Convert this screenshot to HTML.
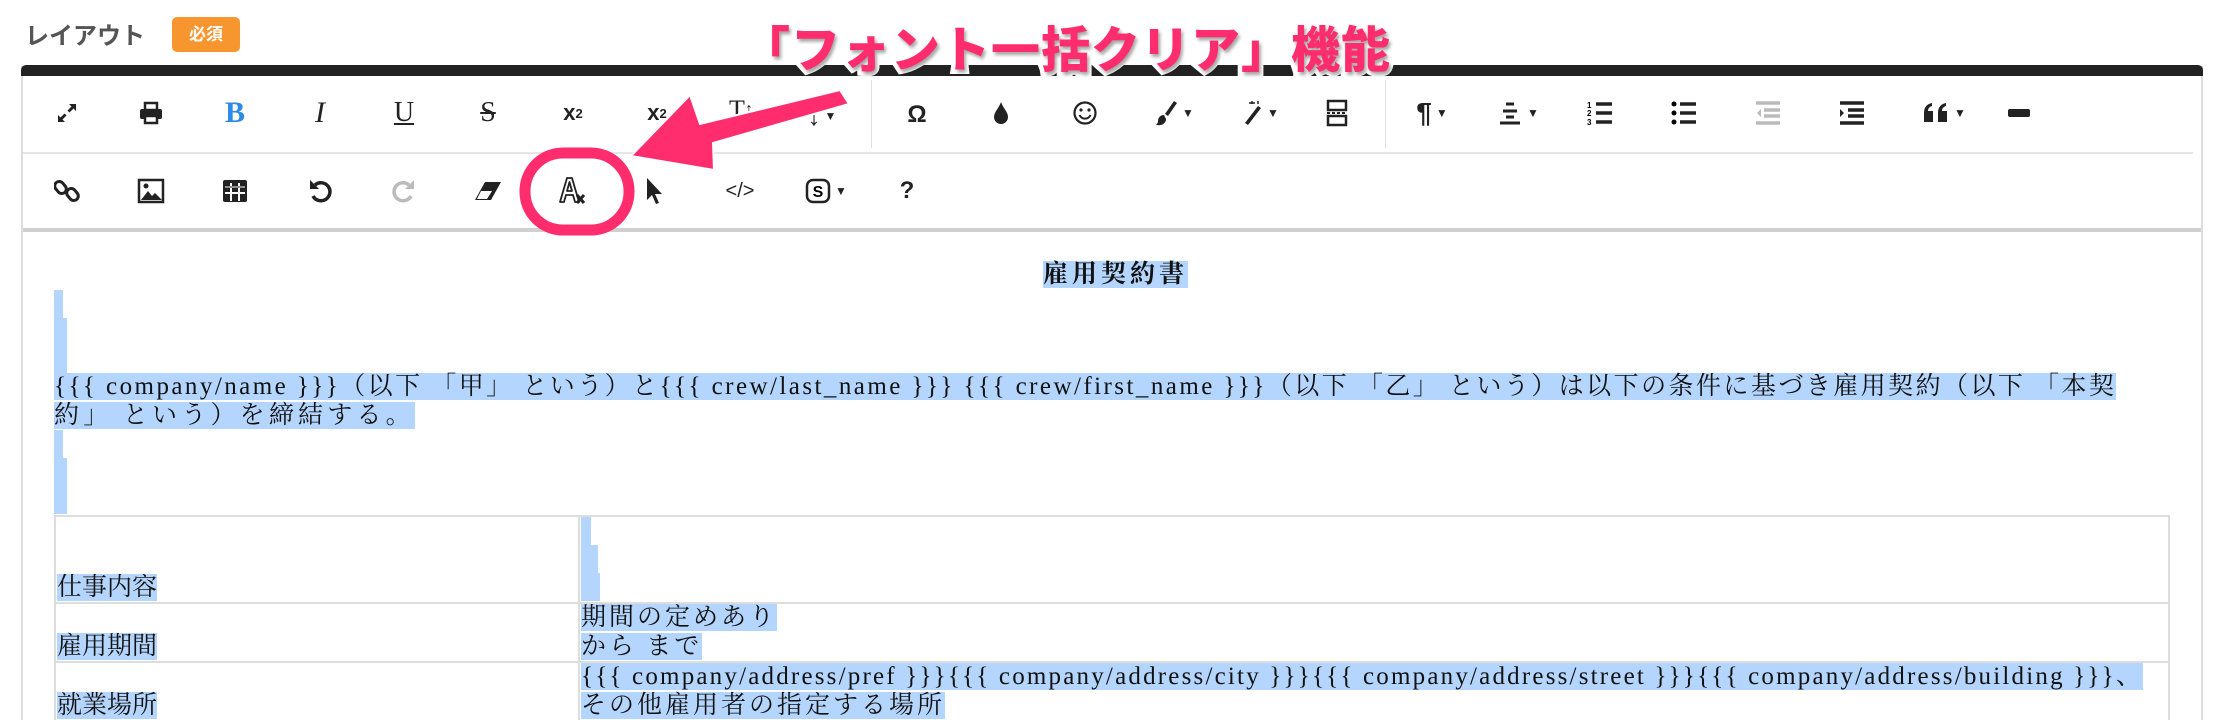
<!DOCTYPE html>
<html style="height:720px;overflow:hidden"><head><meta charset="utf-8"><style>
*{box-sizing:border-box}
body{margin:0;width:2224px;height:720px;overflow:hidden;background:#fff;position:relative;font-family:"Liberation Sans","Noto Sans CJK JP",sans-serif}
.lbl{position:absolute;left:25px;top:16px;font-size:24px;font-weight:bold;color:#555}
.badge{position:absolute;left:172px;top:17px;width:68px;height:35px;background:#f7962f;border-radius:5px;color:#fff;font-size:17px;font-weight:bold;text-align:center;line-height:35px}
.ed{position:absolute;left:21px;top:66px;width:2182px;height:654px;border:2px solid #ddd;border-top:none;border-bottom:none}
.topbar{position:absolute;left:21px;top:65px;width:2182px;height:11px;background:#222;border-radius:5px 5px 0 0}
.sep1{position:absolute;left:23px;top:152px;width:2170px;height:2px;background:#e6e6e6}
.tbb{position:absolute;left:23px;top:228px;width:2178px;height:4px;background:#d0d0d0}
.vs{position:absolute;top:80px;width:1px;height:68px;background:#e0e0e0}
.ic{position:absolute;width:40px;height:40px;margin-left:-20px;margin-top:-20px;display:flex;align-items:center;justify-content:center;color:#222;font-size:26px}
.ic svg{display:block}
.car{font-size:12px;margin-left:4px}
.ct{position:absolute;left:54px;top:0;font-family:"Liberation Serif","Noto Serif CJK SC",serif;font-size:25px;line-height:28.5px;color:#111;white-space:nowrap}
.h{background:#b4d5fe}
.bar{position:absolute;background:#b4d5fe}
.tw{position:absolute;left:54px;top:515px;width:2118px;height:205px;overflow:hidden}
table{width:2116px;table-layout:fixed;border-collapse:collapse;font-family:"Liberation Serif","Noto Serif CJK SC",serif;font-size:25px;line-height:28.5px;color:#111}
td{border:2px solid #ddd;vertical-align:bottom;padding:0 0 0 1px;white-space:nowrap;overflow:hidden}
.ann{position:absolute;left:741px;top:16px;font-family:"Noto Sans CJK JP",sans-serif;font-weight:900;font-size:49px;color:#ff2d6e;letter-spacing:1px;-webkit-text-stroke:9px #fff;paint-order:stroke fill;text-shadow:2px 3px 3px rgba(0,0,0,.35);line-height:62px}
</style></head><body>
<div class="lbl">レイアウト</div>
<div class="badge">必須</div>
<div class="ed"></div>
<div class="topbar"></div>
<div class="sep1"></div>
<div class="tbb"></div>
<div class="vs" style="left:871px"></div>
<div class="vs" style="left:1385px"></div>

<!-- row1 -->
<div class="ic" style="left:67px;top:113px"><svg width="24" height="24" viewBox="0 0 24 24"><path d="M14 3h7v7l-2.5-2.5-4 4-2-2 4-4zM10 21H3v-7l2.5 2.5 4-4 2 2-4 4z" fill="#222"/></svg></div>
<div class="ic" style="left:151px;top:113px"><svg width="26" height="24" viewBox="0 0 26 24"><rect x="7" y="2" width="12" height="7" fill="none" stroke="#222" stroke-width="2.5"/><rect x="2" y="8" width="22" height="10" rx="2" fill="#222"/><rect x="7" y="15" width="12" height="7" fill="#fff" stroke="#222" stroke-width="2.5"/></svg></div>
<div class="ic" style="left:235px;top:113px;font-family:'Liberation Serif',serif;font-weight:bold;color:#2b8be6;font-size:30px">B</div>
<div class="ic" style="left:320px;top:113px;font-family:'Liberation Serif',serif;font-style:italic;font-size:30px">I</div>
<div class="ic" style="left:404px;top:113px;font-family:'Liberation Serif',serif;font-size:28px;text-decoration:underline">U</div>
<div class="ic" style="left:488px;top:113px;font-family:'Liberation Serif',serif;font-size:28px;text-decoration:line-through">S</div>
<div class="ic" style="left:573px;top:113px;font-size:22px;font-weight:bold">x<sub style="font-size:13px">2</sub></div>
<div class="ic" style="left:657px;top:113px;font-size:22px;font-weight:bold">x<sup style="font-size:13px">2</sup></div>
<div class="ic" style="left:741px;top:110px;font-family:'Liberation Serif',serif;font-size:26px">T<span style="font-size:16px">↕</span></div>
<div class="ic" style="left:822px;top:116px;font-size:26px">↓<span class="car">▼</span></div>
<div class="ic" style="left:917px;top:115px;font-size:24px;font-weight:bold">Ω</div>
<div class="ic" style="left:1001px;top:113px"><svg width="18" height="24" viewBox="0 0 18 24"><path d="M9 1C7 7 2 11 2 16a7 7 0 0014 0C16 11 11 7 9 1z" fill="#222"/></svg></div>
<div class="ic" style="left:1085px;top:113px"><svg width="26" height="26" viewBox="0 0 26 26"><circle cx="13" cy="13" r="10.5" fill="none" stroke="#222" stroke-width="2.2"/><circle cx="9" cy="10" r="1.6" fill="#222"/><circle cx="17" cy="10" r="1.6" fill="#222"/><path d="M7.5 15a6 6 0 0011 0" fill="none" stroke="#222" stroke-width="2"/></svg></div>
<div class="ic" style="left:1175px;top:113px;width:60px;margin-left:-30px"><svg width="22" height="26" viewBox="0 0 22 26"><path d="M18 1l3 2-9 13-3-2z" fill="#222"/><path d="M8 15c-4 0-6 3-6 6 0 2-1 3-2 4 5 1 10-1 10-6z" fill="#222"/></svg><span class="car">▼</span></div>
<div class="ic" style="left:1260px;top:113px;width:60px;margin-left:-30px"><svg width="22" height="26" viewBox="0 0 22 26"><path d="M17 6l3 2L7 25l-3-2z" fill="#222"/><path d="M11 1v3M8 3h6M17 1v3" stroke="#222" stroke-width="1.5"/></svg><span class="car">▼</span></div>
<div class="ic" style="left:1337px;top:113px"><svg width="22" height="28" viewBox="0 0 22 28"><rect x="2" y="2" width="18" height="9" fill="none" stroke="#222" stroke-width="2.5"/><rect x="2" y="17" width="18" height="9" fill="none" stroke="#222" stroke-width="2.5"/><path d="M1 14h20" stroke="#222" stroke-width="2" stroke-dasharray="3 2"/></svg></div>
<div class="ic" style="left:1432px;top:113px;width:60px;margin-left:-30px;font-size:28px;font-weight:bold">¶<span class="car">▼</span></div>
<div class="ic" style="left:1518px;top:113px;width:60px;margin-left:-30px"><svg width="26" height="24" viewBox="0 0 26 24"><path d="M9 3h8M6 10h14M9 16h8M3 22h20" stroke="#222" stroke-width="3"/></svg><span class="car">▼</span></div>
<div class="ic" style="left:1600px;top:113px"><svg width="28" height="28" viewBox="0 0 28 28"><path d="M10 5h16M10 14h16M10 23h16" stroke="#222" stroke-width="3.5"/><text x="1" y="9" font-size="8" font-family="Liberation Sans" font-weight="bold">1</text><text x="1" y="17" font-size="8" font-family="Liberation Sans" font-weight="bold">2</text><text x="1" y="26" font-size="8" font-family="Liberation Sans" font-weight="bold">3</text></svg></div>
<div class="ic" style="left:1684px;top:113px"><svg width="28" height="28" viewBox="0 0 28 28"><path d="M10 5h16M10 14h16M10 23h16" stroke="#222" stroke-width="3.5"/><circle cx="4" cy="5" r="2.5"/><circle cx="4" cy="14" r="2.5"/><circle cx="4" cy="23" r="2.5"/></svg></div>
<div class="ic" style="left:1768px;top:113px"><svg width="28" height="28" viewBox="0 0 28 28"><path d="M2 4h24M10 11h16M10 17h16M2 24h24" stroke="#bbb" stroke-width="3.5"/><path d="M7 10v8l-4-4z" fill="#bbb"/></svg></div>
<div class="ic" style="left:1852px;top:113px"><svg width="28" height="28" viewBox="0 0 28 28"><path d="M2 4h24M10 11h16M10 17h16M2 24h24" stroke="#222" stroke-width="3.5"/><path d="M2 10v8l4-4z" fill="#222"/></svg></div>
<div class="ic" style="left:1944px;top:113px;width:60px;margin-left:-30px"><svg width="28" height="24" viewBox="0 0 28 24"><path d="M2 12C2 6 5 3 10 2v3c-3 1-4 3-4 5h5v11H2zM16 12c0-6 3-9 8-10v3c-3 1-4 3-4 5h5v11h-9z" fill="#222"/></svg><span class="car">▼</span></div>
<div class="ic" style="left:2019px;top:113px"><svg width="22" height="10"><rect x="0" y="1" width="22" height="8" rx="2" fill="#222"/></svg></div>

<!-- row2 -->
<div class="ic" style="left:67px;top:191px"><svg width="26" height="26" viewBox="0 0 26 26"><rect x="2" y="3" width="9" height="13" rx="4.5" transform="rotate(-40 6.5 9.5)" fill="none" stroke="#222" stroke-width="3"/><rect x="14" y="10" width="9" height="13" rx="4.5" transform="rotate(-40 18.5 16.5)" fill="none" stroke="#222" stroke-width="3"/></svg></div>
<div class="ic" style="left:151px;top:191px"><svg width="28" height="26" viewBox="0 0 28 26"><rect x="2" y="2" width="24" height="22" fill="none" stroke="#222" stroke-width="2.5"/><path d="M4 22l7-9 4 5 3-3 7 7z" fill="#222"/><circle cx="9" cy="8" r="2.5" fill="#222"/></svg></div>
<div class="ic" style="left:235px;top:191px"><svg width="26" height="24" viewBox="0 0 26 24"><rect x="1" y="1" width="24" height="22" rx="2" fill="#222"/><path d="M3 8h20M3 14h20M9 4v18M17 4v18" stroke="#fff" stroke-width="2"/><path d="M1 8h24" stroke="#222"/></svg></div>
<div class="ic" style="left:320px;top:191px"><svg width="24" height="26" viewBox="0 0 24 26"><path d="M7 7A9 9 0 1 1 5 18" fill="none" stroke="#222" stroke-width="3.5"/><path d="M2 2v9h9z" fill="#222"/></svg></div>
<div class="ic" style="left:404px;top:191px"><svg width="24" height="26" viewBox="0 0 24 26"><path d="M17 7A9 9 0 1 0 19 18" fill="none" stroke="#bbb" stroke-width="3.5"/><path d="M22 2v9h-9z" fill="#bbb"/></svg></div>
<div class="ic" style="left:488px;top:191px"><svg width="30" height="22" viewBox="0 0 30 22"><path d="M12 2h16L18 20H2z" fill="#222"/><path d="M8 11h11l-5 8H4z" fill="#fff"/></svg></div>
<div class="ic" style="left:573px;top:191px"><svg width="30" height="30" viewBox="0 0 30 30"><path d="M9 2h5l7 24h-4l-2-7H8l-2 7H2zM9 15h5l-2.5-9z" fill="#fff" stroke="#222" stroke-width="1.8" stroke-linejoin="round"/><path d="M19 19l7 8M26 19l-7 8" stroke="#222" stroke-width="3"/></svg></div>
<div class="ic" style="left:654px;top:191px"><svg width="18" height="28" viewBox="0 0 18 28"><path d="M2 1v22l5-5 4 9 3-1-4-9h7z" fill="#222"/></svg></div>
<div class="ic" style="left:740px;top:191px;font-size:20px">&lt;/&gt;</div>
<div class="ic" style="left:826px;top:191px;width:60px;margin-left:-30px"><svg width="26" height="26" viewBox="0 0 26 26"><rect x="2" y="2" width="22" height="22" rx="6" fill="none" stroke="#222" stroke-width="2.5"/><text x="13" y="19" text-anchor="middle" font-size="16" font-weight="bold" font-family="Liberation Sans">S</text></svg><span class="car">▼</span></div>
<div class="ic" style="left:907px;top:191px;font-size:24px;font-weight:bold">?</div>

<!-- content -->
<div class="ct" style="top:261px;left:1043px;letter-spacing:4px"><b class="h">雇用契約書</b></div>
<div class="bar" style="left:54px;top:290px;width:9px;height:28px"></div>
<div class="bar" style="left:54px;top:318px;width:13px;height:28px"></div>
<div class="bar" style="left:54px;top:346px;width:13px;height:28px"></div>
<div class="ct" style="top:373px;letter-spacing:2.45px"><span class="h">{{{ company/name }}}（以下 「甲」 という）と{{{ crew/last_name }}} {{{ crew/first_name }}}（以下 「乙」 という）は以下の条件に基づき雇用契約（以下 「本契</span><br><span class="h" style="letter-spacing:4.2px">約」 という）を締結する。</span></div>
<div class="bar" style="left:54px;top:430px;width:9px;height:28px"></div>
<div class="bar" style="left:54px;top:458px;width:13px;height:28px"></div>
<div class="bar" style="left:54px;top:486px;width:13px;height:28px"></div>

<div class="tw">
<table>
<colgroup><col style="width:524px"><col></colgroup>
<tr style="height:87px"><td><span class="h">仕事内容</span></td><td><div style="position:relative;height:85px"><div class="bar" style="left:0;top:0;width:10px;height:28px"></div><div class="bar" style="left:0;top:28px;width:17px;height:28px"></div><div class="bar" style="left:0;top:56px;width:19px;height:28px"></div></div></td></tr>
<tr style="height:58px"><td><span class="h">雇用期間</span></td><td style="letter-spacing:3px"><span class="h">期間の定めあり</span><br><span class="h">から まで</span></td></tr>
<tr style="height:58px"><td><span class="h">就業場所</span></td><td><span class="h" style="letter-spacing:2.2px">{{{ company/address/pref }}}{{{ company/address/city }}}{{{ company/address/street }}}{{{ company/address/building }}}、</span><br><span class="h" style="letter-spacing:3px">その他雇用者の指定する場所</span></td></tr>
<tr style="height:58px"><td></td><td style="vertical-align:top;letter-spacing:3px"><span class="h">始業 時 分 から 終業 時 分 まで （休憩時間 分）</span></td></tr>
</table>
</div>

<!-- annotation -->
<svg style="position:absolute;left:0;top:0" width="2224" height="720">
<polygon points="631,156 690,95 700,124 840,90 849,104 713,143 714,170" fill="#ff2d6e" stroke="#fff" stroke-width="2"/>
<rect x="525" y="153" width="104" height="77" rx="38" fill="none" stroke="#ff2d6e" stroke-width="11"/>
</svg>
<div class="ann">「フォント一括クリア」機能</div>
</body></html>
